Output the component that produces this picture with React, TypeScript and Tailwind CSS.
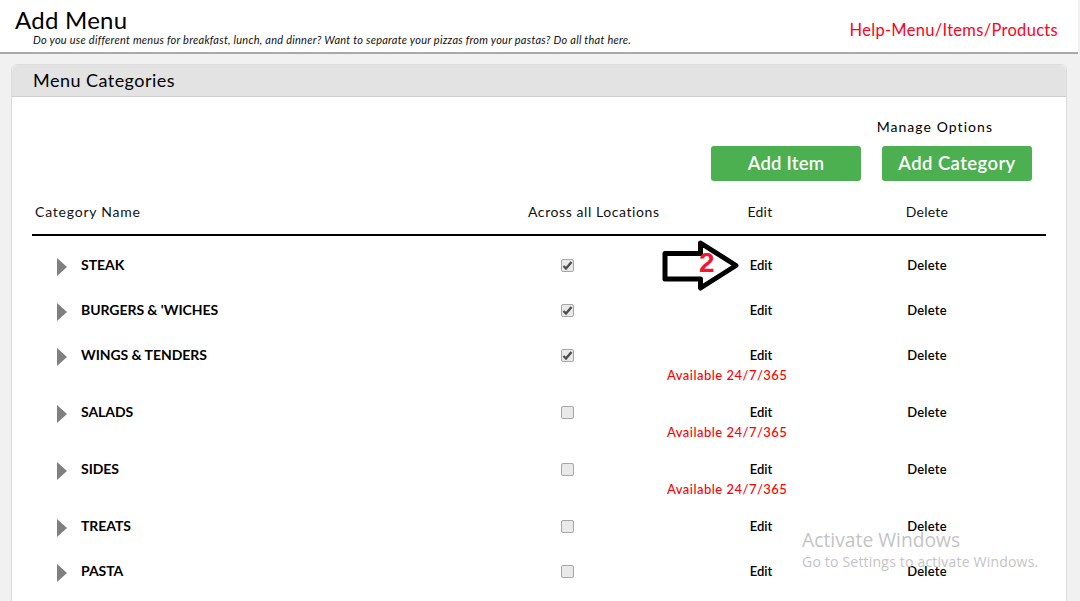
const font = "font-['Lato','Liberation_Sans',sans-serif]";

interface Category {
  name: string;
  across: boolean;
  available?: boolean;
}

const categories: Category[] = [
  { name: 'STEAK', across: true },
  { name: "BURGERS & 'WICHES", across: true },
  { name: 'WINGS & TENDERS', across: true, available: true },
  { name: 'SALADS', across: false, available: true },
  { name: 'SIDES', across: false, available: true },
  { name: 'TREATS', across: false },
  { name: 'PASTA', across: false },
];

function CheckBox({ checked }: { checked: boolean }) {
  return (
    <span className="flex h-[13px] w-[13px] items-center justify-center rounded-[2px] border border-[#a6a6a6] bg-[#e9e9e9]">
      {checked && (
        <svg width="11" height="11" viewBox="0 0 11 11" fill="none">
          <path d="M1.5 6L4 8.5L9.5 2" stroke="#4d4d4d" strokeWidth="2.4" />
        </svg>
      )}
    </span>
  );
}

function CategoryRow({ item }: { item: Category }) {
  return (
    <div className={`grid grid-cols-[472px_126px_262px_70px] ${item.available ? 'h-[57px]' : 'h-[45px]'}`}>
      <div className="flex h-[45px] items-start pt-[14px]">
        <span className="ml-[25px] mt-[2px] h-0 w-0 border-y-[9px] border-l-[10px] border-y-transparent border-l-[#808080]" />
        <span className="ml-[14px] text-[14px] leading-[17px] font-bold tracking-[-0.05px] text-black">{item.name}</span>
      </div>
      <div className="flex h-[45px] items-start justify-center pt-[17px]">
        <CheckBox checked={item.across} />
      </div>
      <div className="flex flex-col">
        <div className="h-[45px] pt-[15px] text-center text-[13px] leading-[16px] font-semibold text-black">Edit</div>
        {item.available && (
          <div className="-mt-[10px] pl-[37px] text-[13px] leading-[16px] tracking-[0.47px] font-medium text-[#ff0000]">
            Available 24/7/365
          </div>
        )}
      </div>
      <div className="h-[45px] pt-[15px] text-center text-[13px] leading-[16px] font-semibold tracking-[0.2px] whitespace-nowrap text-black">
        Delete
      </div>
    </div>
  );
}

export default function App() {
  return (
    <div className={`relative h-[601px] w-[1080px] overflow-hidden bg-[#f1f1f1] ${font}`}>
      <header className="flex h-[54px] w-[1078px] justify-between border-b-2 border-[#a9a9a9] bg-white pr-[20px]">
        <div className="pl-[15px]">
          <h1 className="pt-[6px] text-[24px] leading-[27px] font-normal tracking-[0.25px] text-black">Add Menu</h1>
          <p className="ml-[18px] text-[11px] leading-[13px] tracking-[0.25px] text-[#111] italic">
            Do you use different menus for breakfast, lunch, and dinner? Want to separate your pizzas from your pastas? Do all that here.
          </p>
        </div>
        <a className="pt-[20px] text-[16.5px] leading-[20px] tracking-[0.3px] text-[#ff0022]">Help-Menu/Items/Products</a>
      </header>

      <section className="mx-[11px] mt-[10px] h-[560px] w-[1056px] rounded-t-[6px] border border-[#dddddd] bg-white">
        <div className="h-[32px] rounded-t-[6px] border-b border-[#cfcfcf] bg-[#e4e3e4] pl-[21px]">
          <h2 className="pt-[4px] text-[18px] leading-[22px] font-normal tracking-[0.47px] text-black">Menu Categories</h2>
        </div>

        <div className="px-[20px]">
          <div className="flex flex-col items-end pt-[21px] pr-[14px]">
            <div className="mr-[39px] text-[14px] leading-[17px] tracking-[1.05px] whitespace-nowrap text-black">Manage Options</div>
            <div className="mt-[11px] flex gap-[21px]">
              <button className="h-[35px] w-[150px] rounded-[3px] bg-[#4caf50] text-[18.5px] font-semibold tracking-[0.2px] text-white">Add Item</button>
              <button className="h-[35px] w-[150px] rounded-[3px] bg-[#4caf50] text-[18.5px] font-semibold tracking-[0.4px] text-white">Add Category</button>
            </div>
          </div>

          <div className="mt-[22px] grid h-[33px] grid-cols-[472px_180px_152px_182px] border-b-2 border-black text-[14px] leading-[17px] tracking-[0.25px] text-[#111]">
            <span className="pl-[3px] tracking-[0.78px]">Category Name</span>
            <span className="justify-self-start whitespace-nowrap pl-[24px] tracking-[0.58px]">Across all Locations</span>
            <span className="text-center">Edit</span>
            <span className="text-center">Delete</span>
          </div>

          <div className="pt-[6px]">
            {categories.map((item) => (
              <CategoryRow key={item.name} item={item} />
            ))}
          </div>
        </div>
      </section>

      {/* pasted-on arrow annotation */}
      <div className="absolute top-[240px] left-[662px] h-[52px] w-[78px]">
        <svg width="78" height="52" viewBox="0 0 78 52" fill="none">
          <path d="M3 13.5H38.5V3L74 25.5L38.5 48V39H3Z" fill="white" stroke="black" strokeWidth="5" strokeLinejoin="round" />
        </svg>
        <span className="absolute top-[8px] left-[37px] font-['Liberation_Sans',sans-serif] text-[28px] leading-[30px] font-bold text-[#f0182f]">2</span>
      </div>

      {/* windows watermark */}
      <div className="pointer-events-none absolute top-[527px] left-[802px] font-['Open_Sans',sans-serif] whitespace-nowrap text-[#c4c4c4]">
        <div className="text-[19.3px] leading-[26px]">Activate Windows</div>
        <div className="mt-[-1px] text-[14px] leading-[19px] tracking-[0.2px]">Go to Settings to activate Windows.</div>
      </div>
    </div>
  );
}
